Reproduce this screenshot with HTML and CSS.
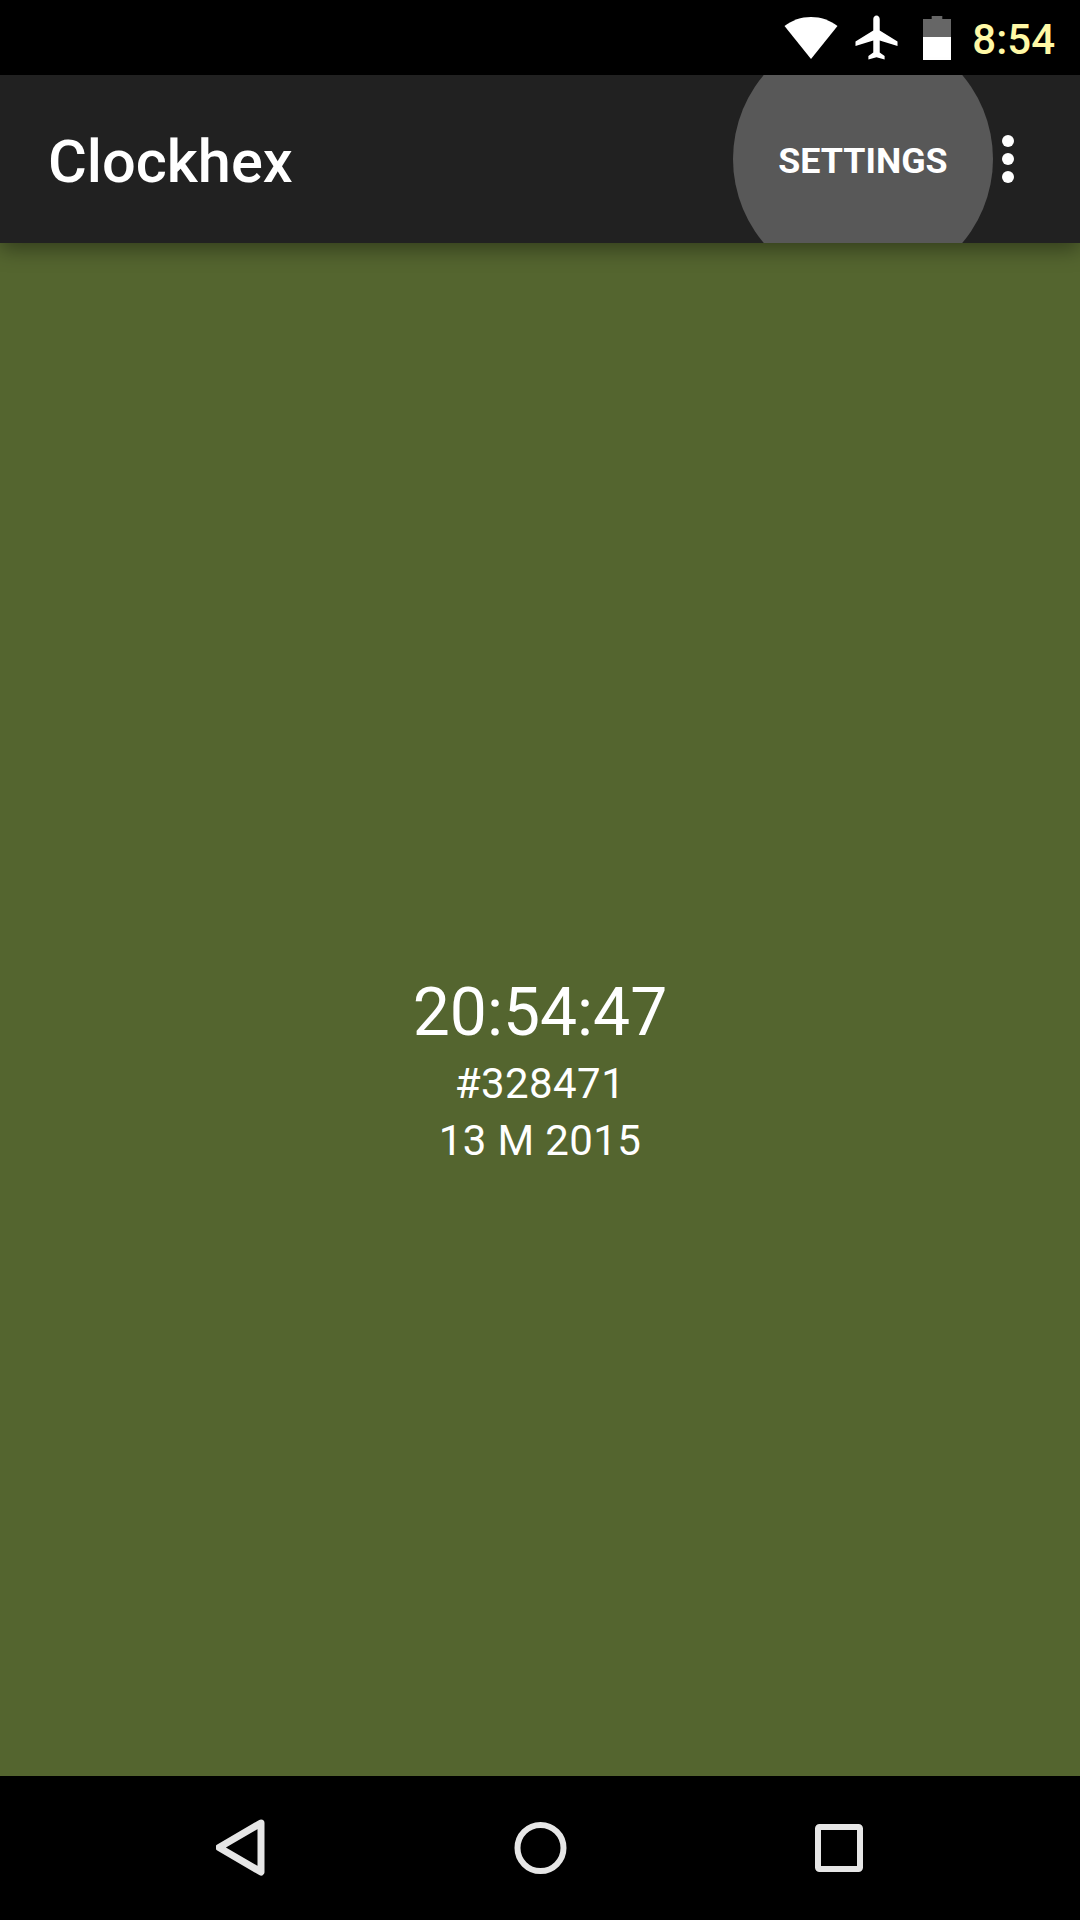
FILE: index.html
```html
<!DOCTYPE html>
<html lang="en">
<head>
<meta charset="utf-8">
<title>Clockhex</title>
<link rel="stylesheet" href="styles.css">
</head>
<body>
<div class="screen">
  <header class="statusbar">
    <svg class="ic-wifi" width="54" height="42" viewBox="0 0 54 42"><path d="M27 42 .5 9C8 3.300 17 0 27 0s19 3.300 26.500 9z" fill="#fff"/></svg>
    <svg class="ic-plane" width="43" height="46" viewBox="0 0 44 46"><path d="M22 0c-2 0-3.300 1.800-3.300 3.800v11.400L.5 26.500v4.800l18.200-5.700v12.200l-5 3.600V45l8.300-2.400 8.300 2.400v-3.600l-5-3.600V25.600l18.200 5.700v-4.800L25.300 15.200V3.800C25.300 1.800 24 0 22 0z" fill="#fff"/></svg>
    <svg class="ic-battery" width="28" height="44" viewBox="0 0 29 44" preserveAspectRatio="none"><path d="M9 0h11v3h9v18H0V3h9z" fill="#666"/><rect y="21" width="29" height="23" fill="#fff"/></svg>
    <span class="clock">8:54</span>
  </header>
  <div class="toolbar">
    <h1 class="title">Clockhex</h1>
    <button class="action">SETTINGS</button>
    <div class="overflow"><i></i><i></i><i></i></div>
  </div>
  <main class="content">
    <div class="time">20:54:47</div>
    <div class="line">#328471</div>
    <div class="line">13 M 2015</div>
  </main>
  <nav class="navbar">
    <svg width="50" height="58" viewBox="0 0 50 58"><path d="M45 4 3 28.500 45 53z" fill="none" stroke="#e6e6e6" stroke-width="7" stroke-linejoin="round"/></svg>
    <svg width="54" height="54" viewBox="0 0 54 54"><circle cx="26.500" cy="27" r="23" fill="none" stroke="#e6e6e6" stroke-width="6"/></svg>
    <svg width="48" height="48" viewBox="0 0 48 48"><rect x="3" y="3" width="42" height="42" rx="1.500" fill="none" stroke="#e6e6e6" stroke-width="6" stroke-linejoin="round"/></svg>
  </nav>
</div>
</body>
</html>
```
FILE: styles.css
```css
* { box-sizing: border-box; }
html, body { margin: 0; padding: 0; }
body { background: #000; font-family: Roboto, "Liberation Sans", sans-serif; color: #fff; }
.screen { width: 1080px; height: 1920px; display: flex; flex-direction: column; overflow: hidden; }

.statusbar { height: 75px; background: #000; display: flex; align-items: center; justify-content: flex-end; padding-right: 25px; flex: none; }
.ic-wifi { margin-right: 17px; }
.ic-plane { margin-right: 25px; }
.ic-battery { margin-right: 21px; }
.clock { font-size: 42px; font-weight: 500; color: #fff9a6; line-height: 71px; padding-top: 4px; }

.toolbar { height: 168px; flex: none; background: #212121; display: flex; align-items: center; padding: 0 66px 0 48px; position: relative; overflow: hidden; box-shadow: 0 6px 20px rgba(0,0,0,.4); z-index: 1; }
.title { margin: 0; padding-top: 5px; font-size: 59.500px; font-weight: 500; flex: 1; }
.action { position: relative; width: 260px; border: 0; background: none; color: #fff; font: 700 35.800px Roboto, sans-serif; padding: 4px 0 0; margin-right: 9px; z-index: 0; }
.action::before { content: ""; position: absolute; left: 0; top: 50%; width: 260px; height: 260px; margin-top: -130px; border-radius: 50%; background: #585858; z-index: -1; }
.overflow { display: flex; flex-direction: column; gap: 6px; }
.overflow i { display: block; width: 12px; height: 12px; border-radius: 50%; background: #fff; }

.content { flex: 1; background: #54652f; display: flex; flex-direction: column; align-items: center; justify-content: center; padding-top: 120px; }
.time { font-size: 66px; line-height: 85px; }
.line { font-size: 42px; line-height: 57px; letter-spacing: .4px; }

.navbar { height: 144px; flex: none; background: #000; display: flex; align-items: center; justify-content: space-between; padding: 0 217px 0 216px; }
```
